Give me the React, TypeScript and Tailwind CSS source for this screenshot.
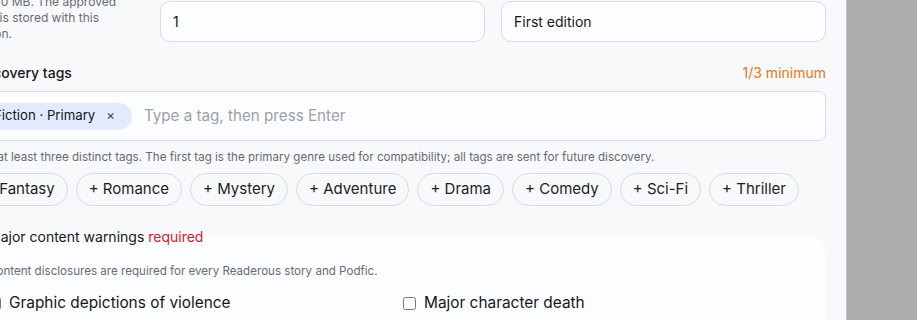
import React from "react";

const suggestions = ["Fantasy", "Romance", "Mystery", "Adventure", "Drama", "Comedy", "Sci-Fi", "Thriller"];

export default function App() {
  return (
    <div className="flex h-[320px] w-[917px] overflow-hidden bg-[#f8f9fa] font-['Inter',sans-serif] text-[#15171c]">
      <div className="w-[846px] shrink-0 overflow-hidden">
        <div className="ml-[-28px] mt-[-6px] flex w-[854px] flex-col">
          {/* top row */}
          <div className="grid grid-cols-[172px_1fr_1fr] gap-x-4">
            <div className="text-[12px] leading-4 text-[#666b74]">
              <div className="flex w-[144px] justify-end whitespace-nowrap">JPG or PNG up to 10 MB. The approved</div>
              <div className="flex w-[127px] justify-end whitespace-nowrap">cover image is stored with this</div>
              <div className="flex w-[40px] justify-end whitespace-nowrap">edition.</div>
            </div>
            <div className="mt-[7px] flex h-[41px] items-center rounded-[10px] border border-[#d9dce1] bg-[#fcfdfe] px-3 text-[14px]">
              1
            </div>
            <div className="mt-[7px] flex h-[41px] items-center rounded-[10px] border border-[#d9dce1] bg-[#fcfdfe] px-3 text-[14px]">
              First edition
            </div>
          </div>

          {/* discovery tags */}
          <div className="mt-[21px] flex items-center justify-between leading-5">
            <span className="text-[14px] font-medium">Discovery tags</span>
            <span className="text-[14px] text-[#e07b1e]">1/3 minimum</span>
          </div>
          <div className="mt-2 flex h-[50px] items-center gap-[12px] rounded-lg border border-[#d9dce1] bg-[#fcfdfe] px-[9px]">
            <span className="flex h-[27px] items-center rounded-full bg-[#e2eafd] pl-[12px] pr-[17px] text-[13.2px]">
              Fiction · Primary
              <span className="ml-[11px] text-[13px] text-[#3f434a]">×</span>
            </span>
            <span className="text-[15.2px] text-[#9ca1a9]">Type a tag, then press Enter</span>
          </div>
          <p className="mt-2 whitespace-nowrap text-[11.6px] leading-4 text-[#666b74]">
            Add at least three distinct tags. The first tag is the primary genre used for compatibility; all tags are sent for future discovery.
          </p>
          <div className="mt-[8px] flex gap-2">
            {suggestions.map((s) => (
              <span
                key={s}
                className="flex h-[33px] items-center rounded-full border border-[#d8dadf] px-[12px] text-[15px] text-[#1b1e24]"
              >
                + {s}
              </span>
            ))}
          </div>

          {/* content warnings */}
          <fieldset className="mt-[21px] rounded-2xl bg-[#fcfdfe] px-4 pb-6">
            <legend className="text-[14px] leading-5">
              Major content warnings <span className="text-[#e1132f]">required</span>
            </legend>
            <p className="mt-4 text-[11.6px] leading-4 text-[#666b74]">
              Content disclosures are required for every Readerous story and Podfic.
            </p>
            <div className="mt-[12px] grid grid-cols-2 gap-x-2">
              <label className="flex h-6 items-center gap-2 text-[15.4px]">
                <input type="checkbox" className="m-0" />
                Graphic depictions of violence
              </label>
              <label className="flex h-6 items-center gap-2 text-[15.4px]">
                <input type="checkbox" className="m-0" />
                Major character death
              </label>
            </div>
          </fieldset>
        </div>
      </div>
      <div className="flex-1 border-l border-[#bfc2ca] bg-[#aeaeaf]" />
    </div>
  );
}
